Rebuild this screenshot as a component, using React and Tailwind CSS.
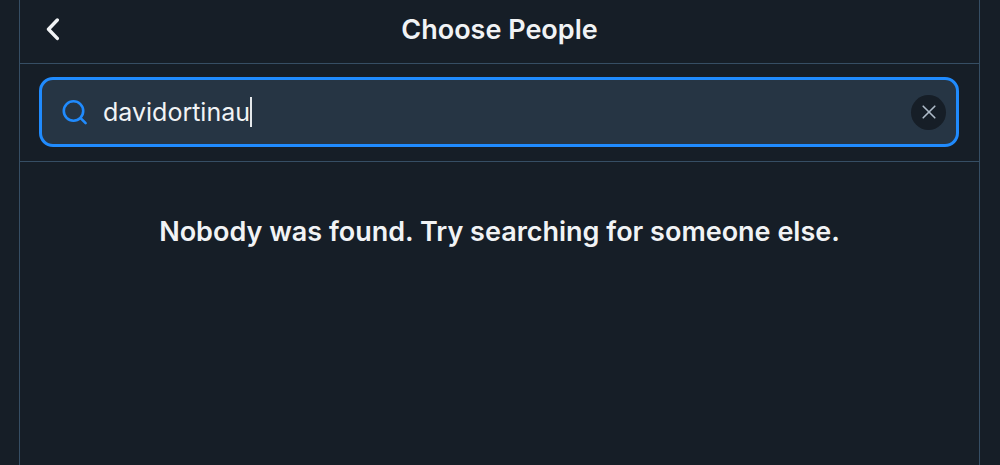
import { useState } from "react";

export default function App() {
  const [query, setQuery] = useState("davidortinau");

  return (
    <div className="flex min-h-screen bg-[#161e27] pr-5 pl-[19px] font-['Inter',sans-serif] text-[#f1f3f5]">
      <main className="flex-1 border-x border-[#364e64]">
        <header className="grid h-16 grid-cols-[64px_1fr_64px] items-center border-b border-[#364e64] pb-1">
          <button type="button" aria-label="Back" className="flex h-10 items-center pl-6">
            <svg width="18" height="24" viewBox="0 0 18 24" fill="none" stroke="currentColor" strokeWidth="3.4" strokeLinecap="round" strokeLinejoin="round" aria-hidden="true">
              <path d="M13.3 2 4.5 11.2l8.8 9.2" />
            </svg>
          </button>
          <h1 className="text-center text-[27px] leading-8 font-semibold">Choose People</h1>
        </header>

        <div className="border-b border-[#364e64] pt-[13px] pr-5 pb-[14px] pl-[19px]">
          <div className="flex h-[70px] items-center rounded-[14px] border-[3px] border-[#208bfe] bg-[#263544] pr-[10px] pl-5">
            <label className="flex min-w-0 flex-1 cursor-text items-center">
              <svg width="26" height="26" viewBox="0 0 26 26" fill="none" stroke="#208bfe" strokeWidth="2.6" strokeLinecap="round" className="shrink-0" aria-hidden="true">
                <circle cx="11.5" cy="12" r="9.7" />
                <path d="m18.6 19.1 5 5" />
              </svg>
              <input
                type="text"
                aria-label="Search"
                value={query}
                onChange={(event) => setQuery(event.target.value)}
                className="ml-[15px] min-w-0 bg-transparent text-[25px] leading-8 caret-transparent outline-none [field-sizing:content]"
              />
              <span className="h-[30px] w-0.5 bg-[#e4e8eb]" aria-hidden="true" />
            </label>
            <button
              type="button"
              aria-label="Clear search"
              onClick={() => setQuery("")}
              className="flex size-[35px] items-center justify-center rounded-full bg-[#161e27]"
            >
              <svg width="14" height="14" viewBox="0 0 14 14" fill="none" stroke="#aebbc9" strokeWidth="1.6" strokeLinecap="round" aria-hidden="true">
                <path d="m1.2 1.2 11.6 11.6M12.8 1.2 1.2 12.8" />
              </svg>
            </button>
          </div>
        </div>

        <p className="px-5 pt-[54px] text-center text-[27px] leading-8 font-semibold">
          Nobody was found. Try searching for someone else.
        </p>
      </main>
    </div>
  );
}
